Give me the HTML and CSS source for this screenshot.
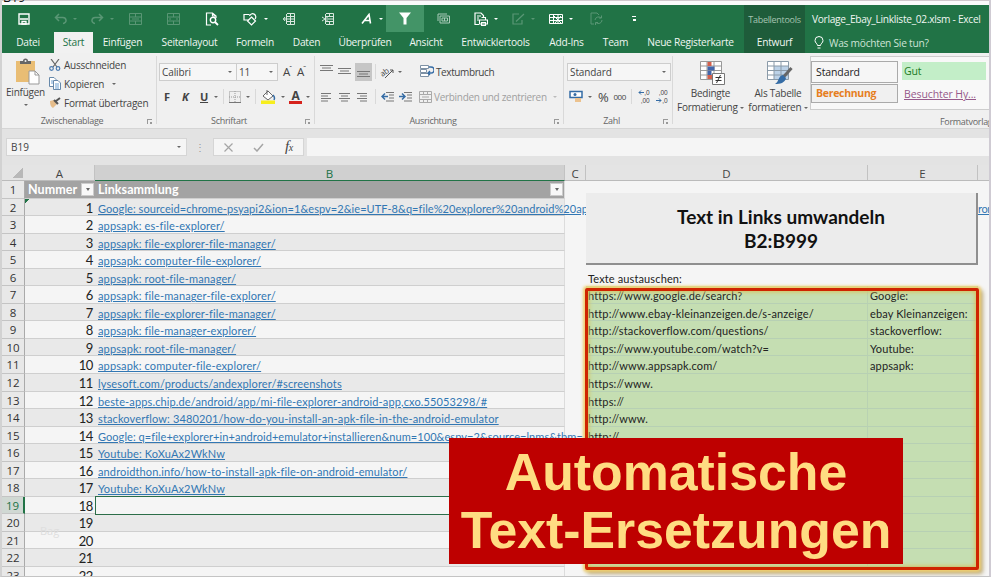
FILE: index.html
```html
<!DOCTYPE html>
<html lang="de">
<head>
    <meta charset="UTF-8">
    <meta name="viewport" content="width=device-width, initial-scale=1.0">
    <title>Vorlage_Ebay_Linkliste_02.xlsm - Excel</title>
    <link rel="stylesheet" href="styles.css">
</head>
<body>
<div class="window">
    <div class="top-strip"><div>B19</div></div>

    <header>
        <div class="header-left">
            <div class="quick-access">
                <span class="qa"><svg width="12" height="12" viewBox="0 0 12 12"><path d="M1 1h10v10H1z" fill="none" stroke="#fff" stroke-width="1.4"/><path d="M2 6h8M4 8.5h4v2.5H4z" stroke="#fff" fill="none" stroke-width="1.3"/></svg></span>
                <span class="qa faint"><svg width="13" height="12" viewBox="0 0 13 12"><path d="M5 1L1.500 4.500 5 8M2 4.500h6a3.500 3 0 0 1 1 6" fill="none" stroke="#fff" stroke-width="1.500"/></svg><i class="caret"></i></span>
                <span class="qa faint"><svg width="13" height="12" viewBox="0 0 13 12"><path d="M8 1l3.500 3.500L8 8M11 4.500H5a3.500 3 0 0 0-1 6" fill="none" stroke="#fff" stroke-width="1.500"/></svg><i class="caret"></i></span>
                <span class="qa faint"><svg width="13" height="12" viewBox="0 0 13 12"><path d="M.5.500h12v11H.500zM.500 4h12M.500 8h12M6.500 0v4M6.500 8v4M3 6h7" fill="none" stroke="#fff"/></svg></span>
                <span class="qa faint"><svg width="13" height="12" viewBox="0 0 13 12"><path d="M.5.500h12v11H.500zM.500 4h12M.500 8h12M6.500 0v4M6.500 8v4M2 6h2M9 6h2" fill="none" stroke="#fff"/></svg></span>
                <span class="qa"><svg width="14" height="14" viewBox="0 0 14 14"><path d="M6 13H1.500V1h6L11 4v2M7.500 1v3H11" fill="none" stroke="#fff" stroke-width="1.200"/><circle cx="8" cy="8" r="2.700" fill="none" stroke="#fff" stroke-width="1.400"/><path d="M10 10l3 3" stroke="#fff" stroke-width="1.800"/></svg></span>
                <span class="qa"><svg width="15" height="14" viewBox="0 0 15 14"><path d="M5.500 8H1V2.500h5.500" fill="none" stroke="#fff" stroke-width="1.200"/><path d="M8.500 5l4 4-4 4-4-4z" fill="none" stroke="#fff" stroke-width="1.200"/><path d="M6.500 4a3.200 3.200 0 1 1 5.500 3" fill="none" stroke="#fff" stroke-width="1.200"/></svg><i class="caret"></i></span>
                <span class="qa"><svg width="12" height="12" viewBox="0 0 12 12"><path d="M4 .500h7.500v11H4M4 3.500h7M4 6h7M4 8.500h7M7.500 1v10M0 6h4M2 4L.500 6 2 8M3.500 1v10" fill="none" stroke="#d9e8df"/></svg></span>
                <span class="qa"><svg width="12" height="12" viewBox="0 0 12 12"><path d="M4 .500h7.500v11H4M4 3.500h7M4 8.500h7M6 6h5M7.500 1v3M7.500 8v3M0 4l3 2-3 2M5 4v4M3.500 1v10" fill="none" stroke="#d9e8df"/></svg></span>
                <span class="qa"><svg width="12" height="12" viewBox="0 0 12 12"><path d="M1 10.500L8 1.500l1.500 9M3.500 7.500h5" fill="none" stroke="#fff" stroke-width="1.600"/></svg><i class="caret"></i></span>
                <span class="qa active"><svg width="12" height="13" viewBox="0 0 12 13"><path d="M0 .500h12L7.500 6v6.500h-3V6z" fill="#fff"/></svg></span>
                <span class="qa"><svg width="13" height="11" viewBox="0 0 13 11"><path d="M1 8V1h9M3 3h9.500v7H3z" fill="none" stroke="#a9cbb8"/><path d="M5 5h5.500v3H5zM7.500 5v3" fill="none" stroke="#a9cbb8"/></svg></span>
                <span class="qa"><svg width="14" height="14" viewBox="0 0 14 14"><path d="M5 12.500H1V1h6l2.500 2.500V5M3 4h4M3 6h2M3 8h2" fill="none" stroke="#fff" stroke-width="1.200"/><path d="M5.500 8h8v4h-8zM7.500 5.500h4V8M7.500 10.500h4v3h-4z" fill="none" stroke="#fff" stroke-width="1.100"/></svg><i class="caret"></i></span>
                <span class="qa faint"><svg width="13" height="12" viewBox="0 0 13 12"><path d="M7 1H1v10h9V7M4 8.500L12 1" fill="none" stroke="#fff" stroke-width="1.200"/></svg><i class="caret"></i></span>
                <span class="qa"><svg width="14" height="12" viewBox="0 0 14 12"><path d="M.500 1.500h13v9H.500zM.500 4.500h13M.500 7.500h13M4.500 1v10M9 1v10M5 3l7 7M12 3l-6 7" fill="none" stroke="#fff"/></svg><i class="caret"></i></span>
                <span class="qa faint"><svg width="13" height="13" viewBox="0 0 13 13"><path d="M4 12H1V1h6l2 2" fill="none" stroke="#fff"/><path d="M5 8a3.500 3.500 0 0 1 6-2M12 8a3.500 3.500 0 0 1-6 2.500M11.500 3.500V6H9M5.500 13v-2.500H8" fill="none" stroke="#fff"/></svg></span>
                <span class="qa"><i class="overflow"></i></span>
            </div>
            <nav>
                <span class="tab">Datei</span>
                <span class="tab selected">Start</span>
                <span class="tab">Einfügen</span>
                <span class="tab">Seitenlayout</span>
                <span class="tab">Formeln</span>
                <span class="tab">Daten</span>
                <span class="tab">Überprüfen</span>
                <span class="tab">Ansicht</span>
                <span class="tab">Entwicklertools</span>
                <span class="tab">Add-Ins</span>
                <span class="tab">Team</span>
                <span class="tab">Neue Registerkarte</span>
            </nav>
        </div>
        <div class="context-tab">
            <span class="context-title">Tabellentools</span>
            <span class="tab">Entwurf</span>
        </div>
        <div class="header-right">
            <span class="doc-title">Vorlage_Ebay_Linkliste_02.xlsm - Excel</span>
            <span class="tell-me"><svg width="10" height="13" viewBox="0 0 10 13"><path d="M3.500 9.500C3.500 7.500 1 7 1 4.500a4 4 0 0 1 8 0C9 7 6.500 7.500 6.500 9.500zM3.500 12h3" fill="none" stroke="#fff"/></svg>Was möchten Sie tun?</span>
        </div>
    </header>

    <section class="ribbon">
        <div class="group clipboard">
            <div class="group-body">
                <div class="big-button">
                    <svg width="26" height="28" viewBox="0 0 26 28"><rect x="1" y="3" width="19" height="21" fill="#e9bd74"/><path d="M5 6V3h3a2.500 2.500 0 0 1 5 0h3v3z" fill="#666"/><circle cx="10.500" cy="3" r="1" fill="#eee"/><path d="M14 13h6l4 4v9H14z" fill="#fff" stroke="#999"/><path d="M20 13v4h4" fill="none" stroke="#999"/></svg>
                    <span>Einfügen</span>
                    <i class="caret"></i>
                </div>
                <div class="clip-list">
                    <span><svg width="12" height="12" viewBox="0 0 12 12"><path d="M2 0l6 8M10 0L4 8" stroke="#666" stroke-width="1.200"/><circle cx="2.500" cy="9.500" r="1.800" fill="none" stroke="#4a7ab0" stroke-width="1.200"/><circle cx="9" cy="9.500" r="1.800" fill="none" stroke="#4a7ab0" stroke-width="1.200"/></svg>Ausschneiden</span>
                    <span><svg width="12" height="13" viewBox="0 0 12 13"><path d="M.500.500H5l2 2v7H.500z" fill="#fff" stroke="#6789aa"/><path d="M4.500 3.500H9l2.500 2.500v6.500h-7z" fill="#fff" stroke="#6789aa"/><path d="M6 7h4M6 9h4M6 11h4M2 4h2M2 6h2" stroke="#6ca0d0"/></svg>Kopieren<i class="caret"></i></span>
                    <span><svg width="12" height="12" viewBox="0 0 12 12"><path d="M1 4l4-1 3 4-4 4c-2-1-3-3-3-7z" fill="#e6bd8b"/><path d="M5 3l4 4M7 4l4-3" stroke="#555" stroke-width="2"/></svg>Format übertragen</span>
                </div>
            </div>
            <div class="group-label">Zwischenablage<i class="launcher"></i></div>
        </div>

        <div class="group font">
            <div class="group-body rows">
                <div class="row">
                    <span class="combo combo-font">Calibri<i class="caret"></i></span>
                    <span class="combo combo-size">11<i class="caret"></i></span>
                    <span class="font-step">A<sup>ˆ</sup></span>
                    <span class="font-step">A<sup>ˇ</sup></span>
                </div>
                <div class="row lower">
                    <b class="fmt">F</b>
                    <b class="fmt italic">K</b>
                    <b class="fmt underline">U</b>
                    <i class="caret"></i>
                    <i class="divider"></i>
                    <svg width="12" height="12" viewBox="0 0 12 12"><path d="M.500.500h11v11H.500zM6 0v12M0 6h12" fill="none" stroke="#999" stroke-dasharray="1 1"/><path d="M0 11.500h12" stroke="#777"/></svg>
                    <i class="caret"></i>
                    <i class="divider"></i>
                    <svg width="15" height="14" viewBox="0 0 15 14"><path d="M7 1l5 5-5 4-5-4zM6 0v5" fill="#fff" stroke="#666"/><path d="M12 5c2 2 2 3 1 5" fill="none" stroke="#356ca5" stroke-width="1.500"/><rect y="10.500" width="14" height="3.500" fill="#f7ee1d"/></svg>
                    <i class="caret"></i>
                    <span class="font-color">A</span>
                    <i class="caret"></i>
                </div>
            </div>
            <div class="group-label">Schriftart<i class="launcher"></i></div>
        </div>

        <div class="group align">
            <div class="group-body rows">
                <div class="row">
                    <svg class="al" width="13" height="13" viewBox="0 0 13 13"><path d="M0 .500h13M2 3h9M0 5.500h13" stroke="#777"/></svg>
                    <svg class="al" width="13" height="13" viewBox="0 0 13 13"><path d="M0 3.500h13M2 6h9M0 8.500h13" stroke="#777"/></svg>
                    <span class="pressed"><svg width="13" height="13" viewBox="0 0 13 13"><path d="M0 6.500h13M2 9h9M0 11.500h13" stroke="#777"/></svg></span>
                    <i class="divider"></i>
                    <svg class="orient" width="14" height="12" viewBox="0 0 14 12"><text x="0" y="9" class="ab" transform="rotate(-35 4 8)">ab</text><path d="M4 12l8-8M12 4v3M12 4H9" fill="none" stroke="#555"/></svg>
                    <i class="caret"></i>
                    <span class="wrap"><svg width="14" height="13" viewBox="0 0 14 13"><path d="M.500.500h8v3h-8zM.500 4.500h6v3h-6zM.500 8.500h8v3h-8z" fill="#fff" stroke="#7d91a5"/><path d="M9 2h2a2.500 2.500 0 0 1 0 6H8M10 6L8 8l2 2" fill="none" stroke="#356ca5" stroke-width="1.300"/></svg>Textumbruch</span>
                </div>
                <div class="row lower">
                    <svg class="al" width="11" height="10" viewBox="0 0 11 10"><path d="M0 1.500h10M0 4h7M0 6.500h10M0 9h7" stroke="#777"/></svg>
                    <svg class="al" width="11" height="10" viewBox="0 0 11 10"><path d="M0 1.500h11M2 4h7M0 6.500h11M2 9h7" stroke="#777"/></svg>
                    <svg class="al" width="11" height="10" viewBox="0 0 11 10"><path d="M0 1.500h10M3 4h7M0 6.500h10M3 9h7" stroke="#777"/></svg>
                    <i class="divider"></i>
                    <svg class="ind" width="13" height="12" viewBox="0 0 13 12"><path d="M5 1.500h8M8 4h5M8 7h5M5 10h8" stroke="#777"/><path d="M7 5.500H1M4 2.500l-3 3 3 3" fill="none" stroke="#356ca5" stroke-width="1.500"/></svg>
                    <svg class="ind" width="13" height="12" viewBox="0 0 13 12"><path d="M5 1.500h8M8 4h5M8 7h5M5 10h8" stroke="#777"/><path d="M0 5.500h6M3 2.500l3 3-3 3" fill="none" stroke="#356ca5" stroke-width="1.500"/></svg>
                    <span class="merge"><svg width="13" height="12" viewBox="0 0 13 12"><path d="M.500.500h12v11H.500zM.500 3.500h12M.500 8.500h12M4.500 0v3M8.500 0v3M4.500 9v3M8.500 9v3M3 6h7" fill="none" stroke="#aaa"/></svg>Verbinden und zentrieren<i class="caret"></i></span>
                </div>
            </div>
            <div class="group-label">Ausrichtung<i class="launcher"></i></div>
        </div>

        <div class="group number">
            <div class="group-body rows">
                <div class="row">
                    <span class="combo combo-number">Standard<i class="caret"></i></span>
                </div>
                <div class="row lower">
                    <svg width="14" height="13" viewBox="0 0 14 13"><path d="M1 1.500h12v6H1z" fill="#fff" stroke="#356ca5" stroke-width="1.500"/><circle cx="6" cy="4.500" r="1.500" fill="#356ca5"/><path d="M6 8h6v4H6z" fill="#ecc28e"/></svg>
                    <i class="caret"></i>
                    <span class="percent">%</span>
                    <span class="thousand">000</span>
                    <i class="divider"></i>
                    <span class="decimals"><span class="with-arrow"><svg width="6" height="5" viewBox="0 0 6 5"><path d="M6 2.500H1M3 .500l-2 2 2 2" fill="none" stroke="#356ca5"/></svg>,0</span><span>,00</span></span>
                    <span class="decimals"><span>,00</span><span class="with-arrow"><svg width="6" height="5" viewBox="0 0 6 5"><path d="M0 2.500h5M3 .500l2 2-2 2" fill="none" stroke="#356ca5"/></svg>,0</span></span>
                </div>
            </div>
            <div class="group-label">Zahl<i class="launcher"></i></div>
        </div>

        <div class="group styles">
            <div class="group-body">
                <div class="big-button cond">
                    <svg width="26" height="25" viewBox="0 0 26 25"><path d="M1.500 1.500h21v18h-21zM1.500 6h21M1.500 10.500h21M1.500 15h21M8 1v18M15 1v18" fill="#fff" stroke="#999"/><path d="M8.500 2h4v4h-4zM8.500 15h5v4h-5z" fill="#d4604d"/><path d="M8.500 6.500h7v4h-7zM8.500 11h4v4h-4z" fill="#4466aa"/><path d="M13.500 13.500h12v11h-12z" fill="#fff" stroke="#777"/><path d="M16.500 17.500h6M16.500 20.500h6M21.500 15l-4 8" stroke="#333"/></svg>
                    <span>Bedingte</span>
                    <span>Formatierung <i class="caret"></i></span>
                </div>
                <div class="big-button table-format">
                    <svg width="27" height="25" viewBox="0 0 27 25"><path d="M1.500 1.500h21v18h-21z" fill="#fff"/><path d="M8 6h14v13H8z" fill="#bcd2e8"/><path d="M1.500 1.500h21v18h-21zM1.500 6h21M1.500 10.500h21M1.500 15h21M8 1v18M15 1v18" fill="none" stroke="#8a9aa8"/><path d="M25.500 8l-8 9" stroke="#666" stroke-width="3"/><path d="M17 15l3 3c-1 5-6 6-11 6 4-2 3-8 8-9z" fill="#356ca5"/></svg>
                    <span>Als Tabelle</span>
                    <span>formatieren <i class="caret"></i></span>
                </div>
                <div class="gallery">
                    <span class="style boxed">Standard</span>
                    <span class="style good">Gut</span>
                    <span class="style boxed calc">Berechnung</span>
                    <span class="style visited">Besuchter Hy...</span>
                </div>
            </div>
            <div class="group-label">Formatvorlagen</div>
        </div>
    </section>

    <section class="formula-bar">
        <span class="name-box">B19<i class="caret"></i></span>
        <span class="grip">⋮</span>
        <span class="formula-buttons">
            <svg width="9" height="9" viewBox="0 0 9 9"><path d="M.500.500l8 8M8.500.500l-8 8" stroke="#a5a5a5" stroke-width="1.200"/></svg>
            <svg width="11" height="9" viewBox="0 0 11 9"><path d="M1 5l3 3 6-7" fill="none" stroke="#a5a5a5" stroke-width="1.500"/></svg>
            <span class="fx">f<small>x</small></span>
        </span>
        <span class="formula-input"></span>
    </section>

    <section class="sheet">
        <div class="sheet-row headings">
            <span class="corner"></span>
            <span class="col">A</span>
            <span class="col current">B</span>
            <span class="col">C</span>
            <span class="col">D</span>
            <span class="col">E</span>
            <span class="col"></span>
        </div>
        <div id="rows"></div>

        <div class="macro-button">Text in Links umwandeln<br>B2:B999</div>
        <div class="highlight-frame"></div>
        <div class="watermark">Bag</div>
        <div class="caption">Automatische<br>Text-Ersetzungen</div>
    </section>
</div>

<script>
    // Column B, starting with row 2
    const links = [
        "Google: sourceid=chrome-psyapi2&ion=1&espv=2&ie=UTF-8&q=file%20explorer%20android%20ap",
        "appsapk: es-file-explorer/",
        "appsapk: file-explorer-file-manager/",
        "appsapk: computer-file-explorer/",
        "appsapk: root-file-manager/",
        "appsapk: file-manager-file-explorer/",
        "appsapk: file-explorer-file-manager/",
        "appsapk: file-manager-explorer/",
        "appsapk: root-file-manager/",
        "appsapk: computer-file-explorer/",
        "lysesoft.com/products/andexplorer/#screenshots",
        "beste-apps.chip.de/android/app/mi-file-explorer-android-app,cxo.55053298/#",
        "stackoverflow: 3480201/how-do-you-install-an-apk-file-in-the-android-emulator",
        "Google: q=file+explorer+in+android+emulator+installieren&num=100&espv=2&source=lnms&tbm=",
        "Youtube: KoXuAx2WkNw",
        "androidthon.info/how-to-install-apk-file-on-android-emulator/",
        "Youtube: KoXuAx2WkNw"
    ];

    // Columns D and E, starting with row 7
    const replacements = [
        ["https://www.google.de/search?", "Google:"],
        ["http://www.ebay-kleinanzeigen.de/s-anzeige/", "ebay Kleinanzeigen:"],
        ["http://stackoverflow.com/questions/", "stackoverflow:"],
        ["https://www.youtube.com/watch?v=", "Youtube:"],
        ["http://www.appsapk.com/", "appsapk:"],
        ["https://www.", ""],
        ["https://", ""],
        ["http://www.", ""],
        ["http://", ""]
    ];

    const rows = document.getElementById("rows");

    function addCell(row, className, text) {
        const cell = document.createElement("span");
        cell.className = className;
        cell.textContent = text;
        row.appendChild(cell);
        return cell;
    }

    for (let n = 1; n <= 23; n++) {
        const row = document.createElement("div");
        row.className = "sheet-row";
        if (n === 1) row.classList.add("table-head");
        else if (n % 2 === 0) row.classList.add("band");

        addCell(row, n === 19 ? "num current" : "num", n);

        const a = addCell(row, "cell a", n === 1 ? "Nummer" : n - 1);
        const b = addCell(row, "cell b", "");
        if (n === 1) {
            b.textContent = "Linksammlung";
            addCell(a, "filter", "");
            addCell(b, "filter", "");
        } else if (links[n - 2]) {
            const google = links[n - 2].startsWith("Google");
            addCell(b, google ? "link long" : "link", links[n - 2]);
        }
        if (n === 2) a.classList.add("flagged");
        if (n === 19) b.classList.add("selected-cell");

        addCell(row, "cell c", "");
        const pair = replacements[n - 7] || ["", ""];
        const green = n >= 7 && n <= 22 ? " green" : "";
        addCell(row, "cell d" + green, n === 6 ? "Texte austauschen:" : pair[0]);
        addCell(row, "cell e" + green, pair[1]);
        const f = addCell(row, "cell f", "");
        if (n === 2) addCell(f, "link", "ron");
        rows.appendChild(row);
    }
</script>
</body>
</html>
```

FILE: styles.css
```css
* {
    box-sizing: border-box;
}

body {
    margin: 0;
    font-family: "Open Sans", "Noto Sans", sans-serif;
    font-size: 10.2px;
    letter-spacing: -0.25px;
    color: #444;
    background-color: #f5f5f5;
}

svg {
    display: block;
    flex: none;
}

.window {
    width: 991px;
    height: 577px;
    overflow: hidden;
    border-left: 2px solid #d2d2d2;
    border-right: 2px solid #cfcbd3;
    border-bottom: 1px solid #c4c4c4;
    display: flex;
    flex-direction: column;
}

.top-strip {
    height: 5px;
    flex: none;
    overflow: hidden;
    background: linear-gradient(#cfc8cc 1px, #fafafa 1px);
    color: #111;
    font-size: 12.5px;
    letter-spacing: 0;
    line-height: 14px;
    text-indent: 1px;
}

.top-strip div {
    margin-top: -9px;
}

.caret {
    display: inline-block;
    flex: none;
    width: 0;
    height: 0;
    border-left: 2px solid transparent;
    border-right: 2px solid transparent;
    border-top: 2.5px solid #666;
}

/* Title bar and tabs */
header {
    display: flex;
    height: 48px;
    flex: none;
    background-color: #217346;
    color: #f0f6f2;
}

.header-left {
    width: 742px;
}

.quick-access {
    display: grid;
    grid-template-columns: 38px 35px 38px 38px 38px 39px 38px 40px 38px 39px 38px 38px 38px 36px 40px 40px 36px;
    height: 27px;
    padding-left: 3px;
}

.qa {
    display: flex;
    align-items: center;
    justify-content: center;
    gap: 6px;
}

.qa .caret {
    border-top-color: #fff;
    margin-right: -10px;
}

.qa.active {
    background-color: #439467;
}

.faint {
    opacity: 0.25;
}

.overflow {
    width: 4px;
    height: 5px;
    border-top: 1px solid #fff;
    background: linear-gradient(#fff, #fff) center bottom / 3px 2px no-repeat;
}

nav {
    display: grid;
    grid-template-columns: 52px 39px 59px 75px 56px 47px 70px 52px 87px 55px 43px 107px;
    height: 21px;
}

.tab {
    text-align: center;
    line-height: 21px;
    white-space: nowrap;
}

.tab.selected {
    background-color: #f1f1f1;
    color: #217346;
}

.context-tab {
    width: 61px;
    background-color: #1e5c3a;
    display: flex;
    flex-direction: column;
}

.context-title {
    height: 27px;
    line-height: 29px;
    text-align: center;
    font-size: 9px;
    letter-spacing: -0.3px;
    color: #a5c4b1;
}

.header-right {
    padding-left: 7px;
    white-space: nowrap;
}

.doc-title {
    display: block;
    height: 27px;
    line-height: 29px;
    letter-spacing: -0.3px;
}

.tell-me {
    display: flex;
    align-items: center;
    gap: 5px;
    height: 21px;
    padding-left: 2px;
    color: #cfe3d6;
}

/* Ribbon */
.ribbon {
    display: flex;
    height: 75px;
    flex: none;
    background-color: #f0f0f0;
    font-size: 10px;
}

.group {
    flex: none;
    display: flex;
    flex-direction: column;
    position: relative;
    white-space: nowrap;
}

.group::after {
    content: "";
    position: absolute;
    right: 0;
    top: 3px;
    bottom: 4px;
    border-right: 1px solid #d9d9d9;
}

.clipboard { width: 155px; }
.font { width: 158px; }
.align { width: 249px; }
.number { width: 109px; }
.styles { width: 316px; overflow: hidden; }
.styles::after { display: none; }

.group-body {
    display: flex;
    height: 61px;
}

.group-body.rows {
    flex-direction: column;
    padding-top: 9px;
}

.group-label {
    position: relative;
    text-align: center;
    font-size: 9px;
    line-height: 15px;
    color: #666;
    letter-spacing: -0.3px;
}

.clipboard .group-label {
    padding-right: 15px;
}

.font .group-label {
    padding-right: 14px;
}

.align .group-label {
    padding-right: 13px;
}

.number .group-label {
    padding-right: 14px;
}

.launcher {
    position: absolute;
    right: 5px;
    top: 6px;
    width: 5px;
    height: 5px;
    border-top: 1px solid #999;
    border-left: 1px solid #999;
    background: linear-gradient(#999, #999) right bottom / 2px 2px no-repeat;
}

.big-button {
    display: flex;
    flex-direction: column;
    align-items: center;
    line-height: 13px;
    padding-top: 5px;
    flex: none;
}

.clipboard .big-button {
    width: 47px;
}

.clipboard .big-button svg {
    margin-left: 4px;
}

.clipboard .big-button .caret {
    margin-top: 5px;
}

.clip-list {
    display: flex;
    flex-direction: column;
    padding-top: 2px;
}

.clip-list span {
    display: flex;
    align-items: center;
    gap: 3px;
    height: 19px;
}

.clip-list .caret {
    margin-left: 5px;
}

.row {
    display: flex;
    align-items: center;
    height: 19px;
}

.row.lower {
    height: 19px;
    margin-top: 6px;
}

.combo {
    display: flex;
    align-items: center;
    justify-content: space-between;
    height: 18px;
    padding: 0 4px 0 2px;
    border: 1px solid #cdcdcd;
    background-color: #f6f6f6;
    letter-spacing: -0.1px;
}

.font .row {
    padding-left: 2px;
}

.combo-font { width: 78px; }
.combo-size { width: 41px; border-left: none; }
.combo-number { width: 104px; margin-left: 3px; }

.font-step {
    margin-left: 5px;
    font-size: 11.5px;
    line-height: 14px;
}

.font-step sup {
    font-size: 8px;
    margin-left: -1px;
    line-height: 0;
}

.font .row.lower {
    padding-left: 7px;
}

.fmt {
    width: 18px;
    font-size: 11px;
}

.italic { font-style: italic; }
.underline { text-decoration: underline; width: 8px; margin-right: 6px; }

.divider {
    width: 1px;
    height: 15px;
    background-color: #d9d9d9;
    margin: 0 5px 0 5px;
}

.font .lower svg {
    margin-right: 5px;
}

.font .lower svg + .caret + .font-color {
    margin-left: 4px;
}

.font-color {
    width: 13px;
    height: 14px;
    margin-right: 4px;
    border-bottom: 3px solid #d6221c;
    font-size: 12px;
    font-weight: bold;
    line-height: 12px;
    text-align: center;
}

.align .row {
    padding-left: 5px;
}

.align .row.lower {
    padding-left: 6px;
}

.align .lower .al {
    margin-right: 7px;
}

.align .lower .al + .divider {
    margin: 0 5px 0 0;
}

.align .row:first-child .al {
    margin-right: 5px;
}

.pressed {
    padding: 2px;
    height: 18px;
    width: 17px;
    background-color: #c6c6c6;
    margin-left: -1px;
}

.pressed + .divider {
    margin: 0 5px 0 3px;
}

.orient {
    overflow: visible;
}

.ab {
    font-size: 8px;
    fill: #444;
}

.wrap,
.merge {
    display: flex;
    align-items: center;
    gap: 2px;
}

.wrap {
    margin-left: 18px;
    letter-spacing: -0.4px;
}

.align .row:first-child .caret {
    margin-left: 3px;
}

.ind {
    margin-right: 5px;
}

.merge {
    margin-left: 2px;
    color: #a0a0a0;
    gap: 2px;
    letter-spacing: -0.3px;
}

.merge .caret {
    border-top-color: #bbb;
    margin-left: 4px;
}

.number .row.lower {
    padding-left: 5px;
}

.number .lower > .caret {
    margin: 0 6px 0 5px;
}

.percent {
    font-size: 13px;
}

.thousand {
    font-size: 8px;
    letter-spacing: -0.5px;
    margin-left: 5px;
}

.decimals {
    display: flex;
    flex-direction: column;
    align-items: flex-end;
    width: 13px;
    margin-right: 5px;
    font-family: "Liberation Sans", Arial, sans-serif;
    font-size: 6.5px;
    letter-spacing: 0;
    line-height: 8px;
}

.with-arrow {
    display: flex;
    align-items: center;
}

.cond { width: 75px; }
.table-format { width: 60px; }

.cond svg,
.table-format svg {
    margin: 2px 0 2px 2px;
}

.cond span,
.table-format span {
    line-height: 13.5px;
}

.cond .caret,
.table-format .caret {
    vertical-align: 2px;
}

.gallery {
    display: grid;
    grid-template-columns: 88px 90px;
    grid-template-rows: 22px 19px;
    gap: 1px 0;
    width: 200px;
    height: 54px;
    margin-top: 3px;
    margin-left: 2px;
    padding-top: 4px;
    border: 1px solid #cdcdcd;
    background-color: #f8f8f8;
    font-size: 10.5px;
    letter-spacing: -0.1px;
}

.style {
    padding-left: 5px;
    line-height: 20px;
}

.boxed {
    border: 1px solid #aaa;
    width: 87px;
    padding-left: 4px;
    color: #222;
    background-color: #f6f6f6;
}

.calc {
    color: #e67e1e;
    font-weight: bold;
    letter-spacing: -0.3px;
    background-color: #f0f0f0;
    line-height: 17px;
}

.good {
    background-color: #c3eec8;
    color: #1b7a25;
    width: 84px;
    height: 18px;
    margin: 1px 0 0 3px;
    line-height: 18px;
    padding-left: 2px;
}

.visited {
    color: #96598a;
    text-decoration: underline;
}

.styles .group-label {
    padding-left: 267px;
    text-align: left;
}

/* Formula bar */
.formula-bar {
    display: flex;
    flex: none;
    height: 37px;
    padding: 9px 0 9px 4px;
    background-color: #e3e3e3;
    border-top: 1px solid #d5d5d5;
}

.name-box {
    display: flex;
    align-items: center;
    justify-content: space-between;
    width: 181px;
    padding: 0 5px 0 4px;
    background-color: #f5f5f5;
    border: 1px solid #d5d5d5;
    font-size: 10px;
    letter-spacing: 0;
}

.grip {
    width: 26px;
    text-align: center;
    line-height: 18px;
    color: #999;
}

.formula-buttons {
    display: flex;
    align-items: center;
    justify-content: space-between;
    width: 91px;
    padding: 0 10px;
    background-color: #f5f5f5;
    border: 1px solid #d5d5d5;
}

.fx {
    font-family: "Liberation Serif", serif;
    font-style: italic;
    font-size: 15px;
    line-height: 14px;
}

.fx small {
    font-size: 10px;
}

.formula-input {
    flex: 1;
    margin-left: 3px;
    background-color: #f5f5f5;
}

/* Sheet */
.sheet {
    position: relative;
    flex: 1;
    background-color: #f5f5f5;
    letter-spacing: 0;
}

.sheet-row {
    display: grid;
    grid-template-columns: 23px 70px 470px 21px 282px 110px 13px;
    grid-template-rows: 100%;
    height: 17.55px;
    line-height: 18px;
}

.headings {
    height: 16px;
    background-color: #e4e4e4;
    border-bottom: 1px solid #bbb;
}

.corner {
    background: linear-gradient(135deg, transparent 50%, #b8b8b8 50%) 10px 2px / 11px 11px no-repeat;
}

.col {
    text-align: center;
    font-size: 11.5px;
    line-height: 17px;
    border-right: 1px solid #c2c2c2;
}

.col.current {
    height: 16px;
    color: #217346;
    background-color: #d0d0d0;
    border-bottom: 1px solid #217346;
}

.num {
    text-align: center;
    font-size: 11.5px;
    line-height: 18px;
    color: #333;
    background-color: #e8e8e8;
    border-right: 1px solid #aaa;
    border-bottom: 1px solid #c4c4c4;
}

.num.current {
    color: #217346;
    background-color: #d0d8d3;
    border-right: 2px solid #217346;
}

.cell {
    font-family: Lato, sans-serif;
    font-size: 11px;
    line-height: 19.5px;
    letter-spacing: 0.13px;
    color: #222;
    white-space: nowrap;
    min-width: 0;
}

.a {
    text-align: right;
    font-size: 13px;
    letter-spacing: -0.4px;
    padding-right: 2px;
    border-bottom: 1px solid #cfcfcf;
}

.b {
    padding-left: 3px;
    border-bottom: 1px solid #cfcfcf;
    border-right: 1px solid #dcdcdc;
}

.band .a,
.band .b {
    background-color: #e9e9e9;
}

.link {
    color: #3277b3;
    text-decoration: underline;
}

.link.long {
    letter-spacing: 0.06px;
}

.f .link {
    letter-spacing: -0.4px;
}

.table-head .a,
.table-head .b {
    display: flex;
    align-items: center;
    justify-content: space-between;
    background-color: #a3a3a3;
    color: #fff;
    font-size: 12.5px;
    letter-spacing: 0.05px;
    font-weight: bold;
    padding-right: 1px;
}

.table-head .a {
    padding-left: 3px;
}

.filter {
    width: 13px;
    height: 13px;
    background-color: #f8f8f8;
    border: 1px solid #ccc;
    display: flex;
    align-items: center;
    justify-content: center;
}

.filter::after {
    content: "";
    border-left: 2.5px solid transparent;
    border-right: 2.5px solid transparent;
    border-top: 3px solid #666;
}

.flagged {
    background-image: linear-gradient(135deg, #217346 50%, transparent 50%);
    background-size: 5px 5px;
    background-repeat: no-repeat;
}

.selected-cell {
    height: 19px;
    margin-top: -1px;
    border: 1px solid #2c6e49;
    position: relative;
}

.d,
.e {
    position: relative;
    padding-left: 2px;
}

.green {
    background-color: #c5deb2;
    border-bottom: 1px solid #b7d0b4;
    border-right: 1px solid #b9d2b2;
}

/* Objects floating on the sheet */
.macro-button {
    position: absolute;
    left: 584px;
    top: 28px;
    width: 392px;
    height: 72px;
    padding-top: 12px;
    background-color: #ececec;
    border-right: 2px solid #8f8f8f;
    border-bottom: 2px solid #8f8f8f;
    color: #111;
    font-family: Lato, sans-serif;
    font-size: 19px;
    font-weight: bold;
    line-height: 24px;
    text-align: center;
}

.highlight-frame {
    position: absolute;
    left: 583px;
    top: 123px;
    width: 394px;
    height: 282px;
    border: 3px solid #cf2400;
    border-radius: 2px;
    box-shadow: 0 0 3px 2px #f0d070, inset 0 0 4px 1px #d8c25c, 3px 3px 4px 1px #b9a97e;
}

.watermark {
    position: absolute;
    left: 38px;
    top: 358px;
    color: #dedede;
    font-size: 11px;
}

.caption {
    position: absolute;
    left: 447px;
    top: 273px;
    width: 454px;
    height: 126px;
    padding-top: 5px;
    background-color: #be0000;
    color: #ffdc82;
    font-family: "Liberation Sans", Arial, sans-serif;
    font-size: 51.8px;
    font-weight: bold;
    line-height: 58px;
    text-align: center;
    white-space: nowrap;
}
```
